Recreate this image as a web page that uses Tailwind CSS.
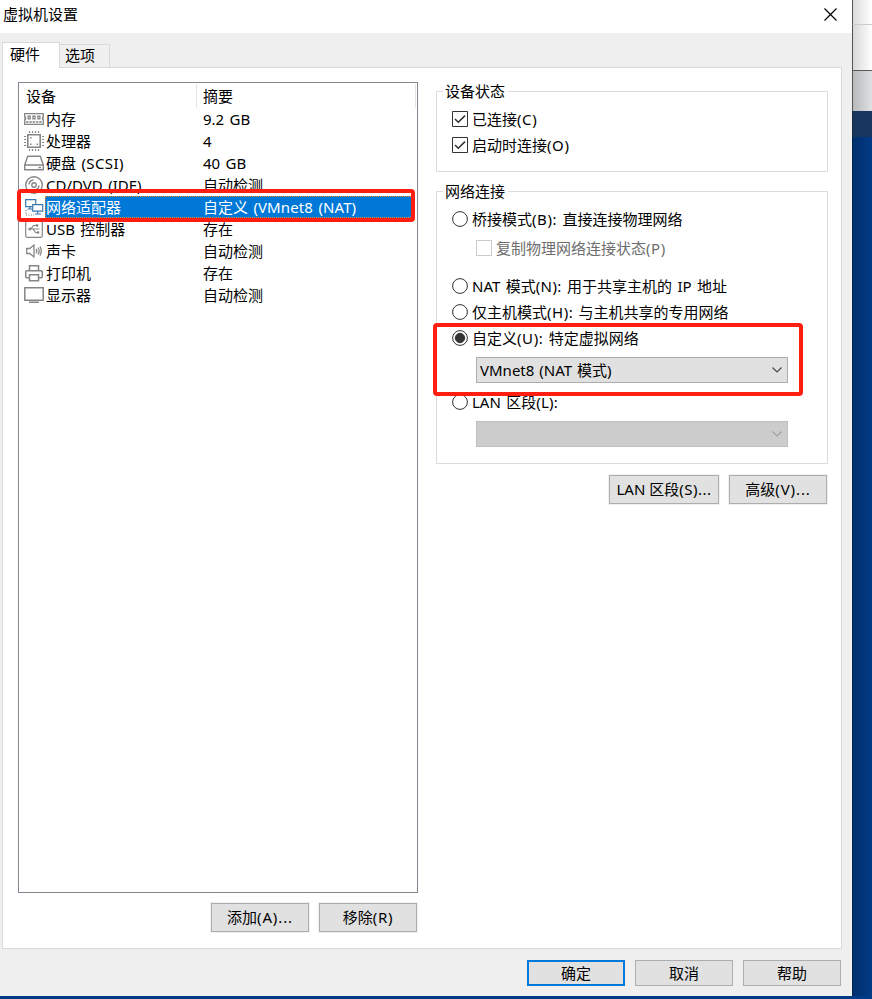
<!doctype html>
<html lang="zh-CN">

<head>
    <meta charset="UTF-8" />
    <meta name="viewport" content="width=device-width, initial-scale=1.0" />
    <title>虚拟机设置</title>
    <script src="https://cdn.jsdelivr.net/npm/@tailwindcss/browser@4"></script>
</head>

<body class="relative flex h-[999px] w-[872px] overflow-hidden bg-[#013a86] font-['Noto_Sans','Noto_Sans_CJK_SC',sans-serif] text-[15px] leading-[22px] text-black [word-spacing:1.5px]">

    <!-- dialog -->
    <div class="flex h-[996px] w-[852px] flex-col bg-[#efefef]">

        <div class="flex h-[33px] shrink-0 items-center justify-between bg-white pr-[15px] pl-[3px]">
            <span class="-mt-[6px]">虚拟机设置</span>
            <svg class="-mt-[5px] size-[13px]" viewBox="0 0 13 13" fill="none" stroke="#000" stroke-width="1.2"><path d="M.5 .5l12 12M12.5 .5l-12 12" /></svg>
        </div>

        <!-- tabs -->
        <div class="mt-[9px] flex h-[26px] shrink-0 items-end pl-[2px]">
            <div class="z-10 h-[26px] w-[58px] border border-b-0 border-[#d9d9d9] bg-white pl-[7px]">硬件</div>
            <div class="-ml-px h-[24px] w-[51px] border border-b-0 border-[#d9d9d9] bg-[#f0f0f0] pl-[5px] leading-[21px]">选项</div>
        </div>

        <div class="-mt-px ml-[2px] flex h-[882px] w-[840px] shrink-0 border border-[#d9d9d9] bg-white pt-[14px] pl-[15px]">

            <div class="flex w-[400px] flex-col">
                <!-- device list -->
                <div class="h-[811px] border border-[#828790]">
                    <div class="flex h-[25px] pt-px">
                        <div class="w-[178px] border-r border-[#e5e5e5] pt-px pl-[7px]">设备</div>
                        <div class="w-[219px] border-r border-[#e5e5e5] pt-px pl-[6px]">摘要</div>
                    </div>
                    <div class="flex h-[22px] items-center pl-[5px]">
                        <svg class="size-5 shrink-0" viewBox="0 0 20 20" fill="none" stroke="#858585" stroke-width="1.3"><path d="M.7 4.7h18.6v3.500h-.8v2h.8v5.100H.7v-5.100h.8v-2H.7z" /><path d="M3.500 6.500h3.300v4H3.500zM8.300 6.500h3.400v4H8.300zM13.200 6.500h3.300v4h-3.300z" fill="#858585" stroke="none" /><path d="M4.500 8.500h1.300M9.300 8.500h1.400M14.200 8.500h1.300" stroke="#ddd" stroke-width="1" /><path d="M2 13h16" stroke-width="1.400" stroke-dasharray="2.500 .8" /></svg>
                        <span class="ml-[2px] w-[157px]">内存</span><span>9.2 GB</span>
                    </div>
                    <div class="flex h-[22px] items-center pl-[5px]">
                        <svg class="size-5 shrink-0" viewBox="0 0 20 20" fill="none" stroke="#858585" stroke-width="1.6"><path d="M3.800 3.800h12.400v12.400H3.800z" /><path d="M5.500 0v2M8.500 0v2M11.500 0v2M14.500 0v2M5.500 18v2M8.500 18v2M11.500 18v2M14.500 18v2M0 5.500h2M0 8.500h2M0 11.500h2M0 14.500h2M18 5.500h2M18 8.500h2M18 11.500h2M18 14.500h2" stroke-width="1.2" /><path d="M6 6h1.500v1.500H6zM6 12.500h1.500V14H6zM12.500 12.500H14V14h-1.500z" fill="#858585" stroke="none" /></svg>
                        <span class="ml-[2px] w-[157px]">处理器</span><span>4</span>
                    </div>
                    <div class="flex h-[22px] items-center pl-[5px]">
                        <svg class="size-5 shrink-0" viewBox="0 0 20 20" fill="none" stroke="#858585" stroke-width="1.4" stroke-linejoin="round"><path d="M3.700 3.200h12.600L19.300 12v4.800H.7V12zM.7 12h18.600M14.500 14.500h2.500" /></svg>
                        <span class="ml-[2px] w-[157px]">硬盘 <span class="tracking-[.4px]">(SCSI)</span></span><span>40 GB</span>
                    </div>
                    <div class="flex h-[22px] items-center pl-[5px]">
                        <svg class="size-5 shrink-0" viewBox="0 0 20 20" fill="none" stroke="#858585" stroke-width="1.4"><circle cx="10" cy="10" r="8.300" /><circle cx="10" cy="10" r="2.200" /><path d="M5 9.500A5 5 0 0 1 9.500 5M15 10.500a5 5 0 0 1-4.500 4.500" /></svg>
                        <span class="ml-[2px] w-[157px]">CD/DVD (IDE)</span><span>自动检测</span>
                    </div>
                    <div class="flex h-[22px] items-center pl-[5px]">
                        <svg class="size-5 shrink-0" viewBox="0 0 20 20" fill="#fff" stroke="#3a79ad" stroke-width="1.2"><path d="M1.700 2.700h10v7h-10zM6 10v2M3.500 12h5" /><path d="M8.700 7.700h10v6.500h-10zM13.700 14.500v2.500M11 17h6" /><path d="M2 13v5h8" fill="none" stroke-dasharray="1 1.500" stroke="#777" /></svg>
                        <div class="ml-px flex h-[22px] w-[370px] items-center border border-dotted border-[#e08a28] bg-[#0078d7] text-white"><span class="w-[157px]">网络适配器</span><span>自定义 <span class="tracking-[.1px]">(VMnet8 (NAT)</span></span></div>
                    </div>
                    <div class="flex h-[22px] items-center pl-[5px]">
                        <svg class="size-5 shrink-0" viewBox="0 0 20 20" fill="none" stroke="#858585" stroke-width="1.2"><rect x="1.700" y="1.700" width="16.600" height="16.600" rx="1.500" /><path d="M5 10h10.500M7 10l2.500-3.500H12M9 10l2.500 3.500H13" /><path d="M6.500 8.300L4 10l2.500 1.700zM12 5.500h2v2h-2zM13 12.500h2v2h-2z" fill="#858585" stroke-width=".4" /></svg>
                        <span class="ml-[2px] w-[157px]">USB 控制器</span><span>存在</span>
                    </div>
                    <div class="flex h-[22px] items-center pl-[5px]">
                        <svg class="size-5 shrink-0" viewBox="0 0 20 20" fill="none" stroke="#858585" stroke-width="1.3"><path d="M2.700 7.500h3L10 4v12l-4.300-3.500h-3zM12 8q1.500 2 0 4M14 6.500q2.300 3.500 0 7M16 5.500q2.500 4.500 0 9" /></svg>
                        <span class="ml-[2px] w-[157px]">声卡</span><span>自动检测</span>
                    </div>
                    <div class="flex h-[22px] items-center pl-[5px]">
                        <svg class="size-5 shrink-0" viewBox="0 0 20 20" fill="#fff" stroke="#858585" stroke-width="1.500"><path d="M5.500 2.700h9v5h-9z" /><rect x="1.700" y="7.700" width="16.600" height="7" rx="1" /><path d="M5.500 11.700h9v6h-9z" /></svg>
                        <span class="ml-[2px] w-[157px]">打印机</span><span>存在</span>
                    </div>
                    <div class="flex h-[22px] items-center pl-[5px]">
                        <svg class="size-5 shrink-0" viewBox="0 0 20 20" fill="none" stroke="#858585" stroke-width="1.500"><path d="M.8 2.700h18.400v12.600H.8zM5 17.300h10" /></svg>
                        <span class="ml-[2px] w-[157px]">显示器</span><span>自动检测</span>
                    </div>
                </div>
                <div class="mt-[10px] flex justify-end gap-[10px] pr-px">
                    <button class="h-[29px] w-[98px] border border-[#adadad] bg-[#e1e1e1] pb-px outline outline-[#f0f0f0]">添加<span class="tracking-[.9px]">(A)...</span></button>
                    <button class="h-[29px] w-[98px] border border-[#adadad] bg-[#e1e1e1] pb-px outline outline-[#f0f0f0]">移除<span class="tracking-[.8px]">(R)</span></button>
                </div>
            </div>

            <div class="ml-[18px] flex w-[392px] flex-col pt-[9px]">
                <!-- device status -->
                <div class="h-[81px] border border-[#dcdcdc] pl-[15px]">
                    <div class="-mt-[12px] -ml-[9px] w-[65px] bg-white pl-[2px]">设备状态</div>
                    <div class="mt-[4px] flex h-[26px] items-center gap-1">
                        <svg class="size-4" viewBox="0 0 16 16" fill="none" stroke="#333"><path d="M.5 .5h15v15H.5z" /><path d="M3 8l3.300 3.300L13 4.600" stroke-width="1.500" /></svg>
                        <span>已连接<span class="tracking-[.6px]">(C)</span></span>
                    </div>
                    <div class="flex h-[26px] items-center gap-1">
                        <svg class="size-4" viewBox="0 0 16 16" fill="none" stroke="#333"><path d="M.5 .5h15v15H.5z" /><path d="M3 8l3.300 3.300L13 4.600" stroke-width="1.500" /></svg>
                        <span>启动时连接<span class="tracking-[.6px]">(O)</span></span>
                    </div>
                </div>

                <!-- network connection -->
                <div class="mt-[19px] h-[273px] border border-[#dcdcdc] pl-[15px]">
                    <div class="-mt-[12px] -ml-[9px] w-[65px] bg-white pl-[2px]">网络连接</div>
                    <div class="mt-[4px] flex h-[26px] items-center gap-1">
                        <svg class="size-4" viewBox="0 0 16 16" fill="none" stroke="#333"><circle cx="8" cy="8" r="7.400" /></svg>
                        <span>桥接模式<span class="tracking-[.6px]">(B):</span> 直接连接物理网络</span>
                    </div>
                    <div class="mt-[3px] flex h-[26px] items-center gap-1 pl-6 text-[#6d6d6d]">
                        <span class="size-4 border border-[#ccc]"></span>
                        <span>复制物理网络连接状态<span class="tracking-[.6px]">(P)</span></span>
                    </div>
                    <div class="mt-[12px] flex h-[26px] items-center gap-1">
                        <svg class="size-4" viewBox="0 0 16 16" fill="none" stroke="#333"><circle cx="8" cy="8" r="7.400" /></svg>
                        <span>NAT 模式<span class="tracking-[.4px]">(N):</span> 用于共享主机的 IP 地址</span>
                    </div>
                    <div class="flex h-[26px] items-center gap-1">
                        <svg class="size-4" viewBox="0 0 16 16" fill="none" stroke="#333"><circle cx="8" cy="8" r="7.400" /></svg>
                        <span>仅主机模式<span class="tracking-[.5px]">(H):</span> 与主机共享的专用网络</span>
                    </div>
                    <div class="flex h-[26px] items-center gap-1">
                        <svg class="size-4" viewBox="0 0 16 16" fill="none" stroke="#333"><circle cx="8" cy="8" r="7.400" /><circle cx="8" cy="8" r="4.700" fill="#333" /></svg>
                        <span>自定义<span class="tracking-[.6px]">(U):</span> 特定虚拟网络</span>
                    </div>
                    <div class="mt-[6px] ml-6 flex h-[26px] w-[312px] items-center justify-between border border-[#adadad] bg-[#e1e1e1] pr-[5px] pl-[3px]">
                        <span class="[word-spacing:1px]">VMnet8 (NAT 模式)</span>
                        <svg class="h-[6px] w-[10px]" viewBox="0 0 10 6" fill="none" stroke="#444" stroke-width="1.1"><path d="M.5 .5L5 5L9.500 .5" /></svg>
                    </div>
                    <div class="mt-[6px] flex h-[26px] items-center gap-1">
                        <svg class="size-4" viewBox="0 0 16 16" fill="none" stroke="#333"><circle cx="8" cy="8" r="7.400" /></svg>
                        <span>LAN 区段<span class="tracking-[.2px]">(L):</span></span>
                    </div>
                    <div class="mt-[6px] ml-6 flex h-[26px] w-[312px] items-center justify-end border border-[#bfbfbf] bg-[#ccc] pr-[5px]">
                        <svg class="h-[6px] w-[10px]" viewBox="0 0 10 6" fill="none" stroke="#a0a0a0" stroke-width="1.1"><path d="M.5 .5L5 5L9.500 .5" /></svg>
                    </div>
                </div>

                <div class="mt-[11px] flex justify-end gap-[10px] pr-px">
                    <button class="h-[29px] w-[110px] border border-[#adadad] bg-[#e1e1e1] pb-[2px] outline outline-[#f0f0f0]">LAN 区段<span class="tracking-[.5px]">(S)...</span></button>
                    <button class="h-[29px] w-[98px] border border-[#adadad] bg-[#e1e1e1] pb-[2px] outline outline-[#f0f0f0]">高级<span class="tracking-[.9px]">(V)...</span></button>
                </div>
            </div>
        </div>

        <div class="mt-[11px] flex justify-end gap-[10px] pr-[11px]">
            <button class="h-[26px] w-[98px] border-2 border-[#0078d7] bg-[#e1e1e1]">确定</button>
            <button class="h-[26px] w-[98px] border border-[#adadad] bg-[#e1e1e1]">取消</button>
            <button class="h-[26px] w-[98px] border border-[#adadad] bg-[#e1e1e1]">帮助</button>
        </div>
    </div>

    <!-- windows behind the dialog -->
    <div class="flex h-[996px] w-5 flex-col bg-linear-to-r from-[#012f6c] to-[#013a86]">
        <div class="h-[25px] border-b border-l border-b-[#ccc] border-l-[#555] bg-linear-to-r from-[#dcdcdc] to-white"></div>
        <div class="h-[46px] border-b border-l border-b-[#5a5a5e] border-l-[#555] bg-linear-to-r from-[#d8d8d8] to-white"></div>
        <div class="h-[40px] border-l border-[#555] bg-linear-to-r from-[#b8b9bb] to-[#dfe0e2]"></div>
        <div class="h-[26px] border-l border-[#1a2a40] bg-[#18365d]"></div>
        <div class="flex-1 border-l border-[#00264f]"></div>
    </div>

    <!-- red highlights -->
    <div class="absolute top-[189px] left-[17px] h-[33px] w-[398px] rounded-[4px] border-4 border-[#ff1e10]"></div>
    <div class="absolute top-[323px] left-[433px] h-[73px] w-[370px] rounded-[4px] border-4 border-[#ff1e10]"></div>
</body>

</html>
